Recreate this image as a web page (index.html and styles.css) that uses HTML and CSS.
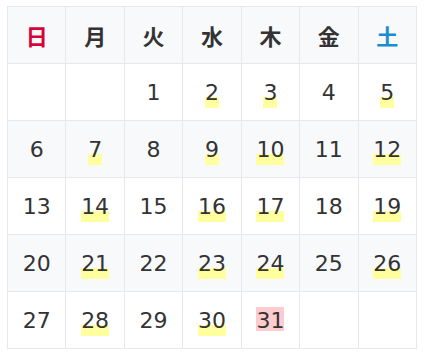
FILE: index.html
```html
<!DOCTYPE html>
<html lang="ja">
<head>
<meta charset="utf-8">
<link rel="stylesheet" href="styles.css">
</head>
<body>
<table class="cal">
  <thead>
    <tr>
      <th class="sun">日</th><th>月</th><th>火</th><th>水</th><th>木</th><th>金</th><th class="sat">土</th>
    </tr>
  </thead>
  <tbody>
    <tr><td></td><td></td><td>1</td><td><span class="hl">2</span></td><td><span class="hl">3</span></td><td>4</td><td><span class="hl">5</span></td></tr>
    <tr><td>6</td><td><span class="hl">7</span></td><td>8</td><td><span class="hl">9</span></td><td><span class="hl">10</span></td><td>11</td><td><span class="hl">12</span></td></tr>
    <tr><td>13</td><td><span class="hl">14</span></td><td>15</td><td><span class="hl">16</span></td><td><span class="hl">17</span></td><td>18</td><td><span class="hl">19</span></td></tr>
    <tr><td>20</td><td><span class="hl">21</span></td><td>22</td><td><span class="hl">23</span></td><td><span class="hl">24</span></td><td>25</td><td><span class="hl">26</span></td></tr>
    <tr><td>27</td><td><span class="hl">28</span></td><td>29</td><td><span class="hl">30</span></td><td><span class="today">31</span></td><td></td><td></td></tr>
  </tbody>
</table>
</body>
</html>
```

FILE: styles.css
```css
html, body {
  margin: 0;
  padding: 0;
  background: #ffffff;
}

body {
  padding: 6px 0 0 7px;
  font-family: "DejaVu Sans", "Noto Sans CJK JP", sans-serif;
  color: #333333;
}

.cal {
  border-collapse: collapse;
  table-layout: fixed;
  width: 410px;
}

.cal th,
.cal td {
  border: 1px solid #e6e8eb;
  padding: 0;
  height: 56px;
  text-align: center;
  vertical-align: middle;
}

.cal th {
  background: #f7f9fb;
  font-family: "Noto Sans CJK JP", sans-serif;
  font-weight: 700;
  font-size: 22px;
  color: #333333;
}

.cal th.sun { color: #d6003b; }
.cal th.sat { color: #1a8dcc; }

.cal td {
  font-size: 22px;
  background: #ffffff;
}

.cal tbody tr:nth-child(even) td {
  background: #f7f9fb;
}

.hl {
  padding-bottom: 3px;
  background: linear-gradient(transparent 61%, #ffffa0 61%);
}

.today {
  display: inline-block;
  line-height: 20px;
  padding-top: 4px;
  background: #fccccf;
}
```
